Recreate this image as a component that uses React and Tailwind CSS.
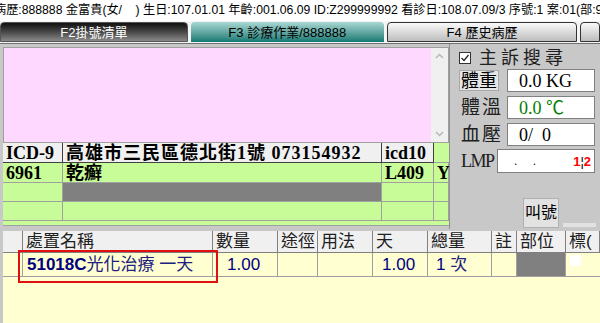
import React from 'react';

const serif = { fontFamily: '"Liberation Serif", "Noto Sans CJK TC", serif' };
const sans = { fontFamily: '"Liberation Sans", "Noto Sans CJK TC", sans-serif' };

function Tab({ label, className, textClass }) {
  return (
    <div className={`h-[20px] rounded-t-[4px] flex items-center justify-center text-[13px] leading-none ${className}`}>
      <span className={textClass}>{label}</span>
    </div>
  );
}

function IcdTable() {
  const head = 'bg-[#f0f0f0] border-r border-b border-[#404040] h-[20px] flex items-center px-[3px]';
  const cell = 'border-r border-b border-[#a0a0a0] flex items-center px-[3px]';
  return (
    <div className="font-bold text-[18px] leading-none text-black" style={serif}>
      <div className="flex h-[20px]">
        <div className={`${head} w-[60px]`}>ICD-9</div>
        <div className={`${head} w-[319px] tracking-[1px] whitespace-nowrap overflow-hidden`}>高雄市三民區德北街1號 073154932</div>
        <div className={`${head} w-[52px]`}>icd10</div>
        <div className="w-[15px] bg-[#c8fc98] border-b border-[#a0a0a0]" />
      </div>
      <div className="flex h-[20px] bg-[#c8fc98]">
        <div className={`${cell} w-[60px]`}>6961</div>
        <div className={`${cell} w-[319px]`}>乾癬</div>
        <div className={`${cell} w-[52px]`}>L409</div>
        <div className={`${cell} w-[15px] px-[1px]`}>Y</div>
      </div>
      <div className="flex h-[19px] bg-[#c8fc98]">
        <div className={`${cell} w-[60px]`} />
        <div className={`${cell} w-[319px] bg-[#808080]`} />
        <div className={`${cell} w-[52px]`} />
        <div className={`${cell} w-[15px]`} />
      </div>
      <div className="flex h-[19px] bg-[#c8fc98]">
        <div className={`${cell} w-[60px]`} />
        <div className={`${cell} w-[319px]`} />
        <div className={`${cell} w-[52px]`} />
        <div className={`${cell} w-[15px]`} />
      </div>
      <div className="h-[5px] bg-[#c8fc98] border-b border-[#a0a0a0]" />
    </div>
  );
}

function VitalRow({ label, value, valueClass }) {
  return (
    <div className="flex items-center h-[23px] mt-[4px]">
      <div className="w-[48px] pl-[2px] text-[19px] leading-none text-[#202020] tracking-[2px] whitespace-nowrap" style={serif}>{label}</div>
      <div className="w-[88px] h-[23px] bg-white border border-[#808080] flex items-center pl-[11px] text-[18px] leading-none" style={serif}>
        <span className={valueClass}>{value}</span>
      </div>
    </div>
  );
}

function SidePanel() {
  return (
    <div className="w-[151px] bg-[#c8c8c8] border-l border-[#909090] pl-[9px] pt-[6px] flex flex-col">
      <div className="flex items-center h-[16px]">
        <div className="w-[12px] h-[12px] bg-white border border-[#333] flex items-center justify-center">
          <svg width="10" height="10" viewBox="0 0 10 10"><path d="M1.5 5 L4 7.5 L8.5 2" fill="none" stroke="#222" strokeWidth="1.2" /></svg>
        </div>
        <span className="ml-[8px] text-[18px] leading-none tracking-[4px] text-[#202020] whitespace-nowrap" style={serif}>主訴搜尋</span>
      </div>
      <div className="flex items-center h-[23px] mt-[3px]">
        <div className="w-[40px] h-[21px] bg-[#e6e6e6] border border-[#a8a8a8] flex items-center justify-center text-[18px] leading-none whitespace-nowrap" style={sans}>體重</div>
        <div className="ml-[8px] w-[88px] h-[23px] bg-white border border-[#808080] flex items-center pl-[11px] text-[18px] leading-none" style={serif}>0.0 KG</div>
      </div>
      <VitalRow label="體溫" value="0.0 ℃" valueClass="text-[#008000]" />
      <VitalRow label="血壓" value="0/  0" valueClass="whitespace-pre" />
      <div className="flex items-center h-[24px] mt-[3px]">
        <div className="w-[38px] pl-[2px] text-[18px] leading-none tracking-[-1.5px] text-[#202020] whitespace-nowrap" style={serif}>LMP</div>
        <div className="w-[98px] h-[24px] bg-white border border-[#808080] flex items-center relative text-[12px]" style={sans}>
          <span className="ml-[16px] tracking-[6px]">. .</span>
          <span className="absolute right-[3px] top-[5px] text-[13px] leading-none font-bold text-[#ff0000]" style={sans}>1<span className="text-black font-normal">¦</span>2</span>
        </div>
      </div>
      <div className="flex items-end mt-[25px]">
        <div className="ml-[64px] w-[36px] h-[30px] bg-[#e2e2e2] border border-[#b0b0b0] flex items-center justify-center text-[16px] leading-none whitespace-nowrap" style={sans}>叫號</div>
        <div className="ml-[4px] mb-[1px] w-[33px] h-[4px] bg-[#e2e2e2]" />
      </div>
    </div>
  );
}

function OrderTable() {
  const cols = [
    { w: 20, h: '' },
    { w: 190, h: '處置名稱' },
    { w: 65, h: '數量' },
    { w: 40, h: '途徑' },
    { w: 55, h: '用法' },
    { w: 55, h: '天' },
    { w: 64, h: '總量' },
    { w: 25, h: '註' },
    { w: 49, h: '部位' },
    { w: 34, h: '標(' },
  ];
  return (
    <div className="flex-1 bg-[#ffffd2] border-l-[3px] border-[#c8c8c8] relative overflow-hidden" style={sans}>
      <div className="flex h-[22px] bg-[#f0f0f0] text-[17px] leading-none text-[#202020]">
        {cols.map((c, i) => (
          <div key={i} style={{ width: c.w }} className="shrink-0 h-full border-r border-b border-[#808080] flex items-center pl-[3px] overflow-hidden whitespace-nowrap">
            {c.h}
          </div>
        ))}
      </div>
      <div className="flex h-[24px] text-[17px] leading-none text-[#000080]">
        <div style={{ width: 20 }} className="shrink-0 border-r border-b border-[#a0a0a0]" />
        <div style={{ width: 190 }} className="shrink-0 border-r border-b border-[#a0a0a0] flex items-center pl-[4px] whitespace-nowrap">
          <span className="font-bold">51018C</span><span className="text-[#202080]">光化治療 一天</span>
        </div>
        <div style={{ width: 65 }} className="shrink-0 border-r border-b border-[#a0a0a0] flex items-center pl-[14px]">1.00</div>
        <div style={{ width: 40 }} className="shrink-0 border-r border-b border-[#a0a0a0]" />
        <div style={{ width: 55 }} className="shrink-0 border-r border-b border-[#a0a0a0]" />
        <div style={{ width: 55 }} className="shrink-0 border-r border-b border-[#a0a0a0] flex items-center pl-[9px]">1.00</div>
        <div style={{ width: 64 }} className="shrink-0 border-r border-b border-[#a0a0a0] flex items-center pl-[8px] whitespace-pre">1 <span className="text-[#202080]">次</span></div>
        <div style={{ width: 25 }} className="shrink-0 border-r border-b border-[#a0a0a0]" />
        <div style={{ width: 49 }} className="shrink-0 border-r border-b border-[#a0a0a0] bg-[#808080]" />
        <div style={{ width: 34 }} className="shrink-0 border-b border-[#a0a0a0] pl-[4px] pt-[2px]">
          <div className="w-[11px] h-[11px] bg-white" />
        </div>
      </div>
      <div className="absolute left-[15px] top-[19px] w-[200px] h-[33px] border-2 border-[#e01010]" />
    </div>
  );
}

export default function App() {
  return (
    <div className="w-[600px] h-[323px] overflow-hidden bg-white flex flex-col">
      <div className="h-[21px] shrink-0 flex items-center whitespace-nowrap text-[12.2px] leading-none text-black -ml-[6px] overflow-hidden" style={sans}>
        病歷:888888 金富貴(女/&nbsp;&nbsp;&nbsp;&nbsp;) 生日:107.01.01 年齡:001.06.09 ID:Z299999992 看診日:108.07.09/3 序號:1 案:01(部:9
      </div>
      <div className="h-[22px] shrink-0 flex items-end gap-[3px] bg-[#f4f4f4] pb-[1px]" style={sans}>
        <Tab label="F2掛號清單" className="w-[192px] bg-gradient-to-b from-[#111] to-[#8a8a8a] border border-[#555] text-white" />
        <Tab label="F3 診療作業/888888" className="w-[197px] bg-gradient-to-b from-[#a8d8d4] to-[#0a7a74] text-black" />
        <Tab label="F4 歷史病歷" className="w-[195px] bg-gradient-to-b from-[#fafafa] to-[#bdbdbd] border border-[#333] text-black" />
        <Tab label="" className="w-[20px] bg-gradient-to-b from-[#fafafa] to-[#bdbdbd] border border-[#333]" />
      </div>
      <div className="flex-1 flex flex-col bg-[#c8c8c8] border-t border-[#707070]">
        <div className="flex h-[185px] shrink-0">
          <div className="w-[449px] pl-[3px] pt-[3px] flex flex-col">
            <div className="flex h-[96px] border border-[#a0a0a0]">
              <div className="flex-1 bg-[#ffd8ff]" />
              <div className="w-[17px] bg-[#f0f0f0] flex flex-col items-center justify-between py-[5px]">
                <svg width="9" height="6" viewBox="0 0 9 6"><path d="M1 5 L4.5 1.5 L8 5" fill="none" stroke="#b8b8b8" strokeWidth="1.5" /></svg>
                <svg width="9" height="6" viewBox="0 0 9 6"><path d="M1 1 L4.5 4.5 L8 1" fill="none" stroke="#b8b8b8" strokeWidth="1.5" /></svg>
              </div>
            </div>
            <IcdTable />
          </div>
          <SidePanel />
        </div>
        <div className="flex-1 flex pt-[2px]">
          <OrderTable />
        </div>
      </div>
    </div>
  );
}
